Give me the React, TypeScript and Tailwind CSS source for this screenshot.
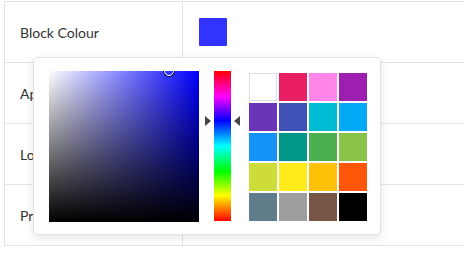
import * as React from 'react';

const swatches = [
    '#ffffff', '#e91e63', '#ff85e9', '#9c1fb0',
    '#6a35b8', '#3f51b5', '#00bcd4', '#03a9f4',
    '#1592f5', '#009688', '#4caf50', '#8bc34a',
    '#cddc39', '#ffeb1a', '#ffc107', '#ff5607',
    '#607d8b', '#9e9e9e', '#795548', '#000000'
];

const rows = ['Block Colour', 'Appearance', 'Location', 'Preview'];

const App = () => {
    return (
        <div className="relative w-[464px] h-[254px] bg-white overflow-hidden font-['Lato',sans-serif]">
            <div className="ml-[4px] mt-[1px] border-l border-t border-[#e4e4e4] w-[600px]">
                {rows.map((label, i) => (
                    <div key={label} className="flex h-[61px] border-b border-[#e4e4e4]">
                        <div className="w-[178px] border-r border-[#e4e4e4] pl-[15px] flex items-center text-[14px] text-[#333]">
                            {label}
                        </div>
                        <div className="flex items-center pl-[16px]">
                            {i === 0 && <div className="w-[28px] h-[28px] bg-[#3333ff] rounded-[1px]" />}
                        </div>
                    </div>
                ))}
            </div>

            {/* colour picker popover */}
            <div className="absolute left-[33px] top-[57px] w-[348px] h-[178px] bg-white border border-[#e2e2e2] rounded-[5px] shadow-[0_3px_10px_rgba(0,0,0,0.1)] flex pl-[15px] pt-[13px]">
                <div className="relative w-[150px] h-[151px] overflow-hidden bg-[#0000ff] bg-[linear-gradient(to_top,#000,transparent),linear-gradient(to_right,#fff,transparent)]">
                    <div className="absolute left-[115px] top-[-5px] w-[10px] h-[10px] rounded-full border-[1.5px] border-white shadow-[0_0_0_1px_rgba(0,0,0,0.8)]" />
                </div>
                <div className="relative ml-[15px] w-[17px] h-[150px] bg-[linear-gradient(to_bottom,#f00_0%,#f0f_17%,#00f_33%,#0ff_50%,#0f0_67%,#ff0_83%,#f00_100%)]">
                    <div className="absolute left-[-9px] top-[45px] w-0 h-0 border-y-[5px] border-y-transparent border-l-[6px] border-l-[#444]" />
                    <div className="absolute right-[-9px] top-[45px] w-0 h-0 border-y-[5px] border-y-transparent border-r-[6px] border-r-[#444]" />
                </div>
                <div className="ml-[18px] mt-[2px] grid grid-cols-4 gap-[2px] h-fit">
                    {swatches.map((c, i) => (
                        <div
                            key={i}
                            className={i === 0 ? 'w-[28px] h-[28px] border border-[#e0e0e0]' : 'w-[28px] h-[28px]'}
                            style={{background: c}}
                        />
                    ))}
                </div>
            </div>
        </div>
    );
};

export default App;
